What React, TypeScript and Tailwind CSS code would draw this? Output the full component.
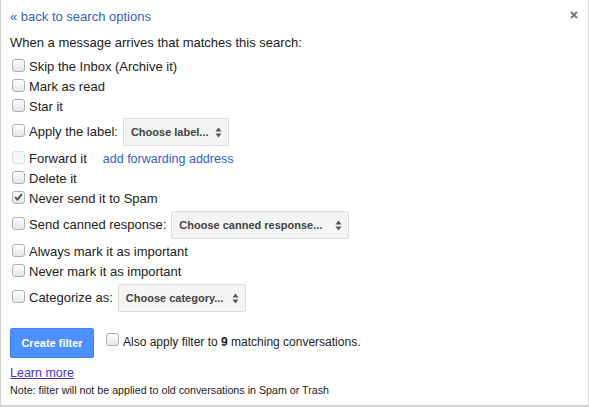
import React from 'react'

interface CheckboxProps {
  checked?: boolean
  disabled?: boolean
}

const Checkbox: React.FC<CheckboxProps> = ({ checked = false, disabled = false }) => (
  <span
    className={`relative flex h-[13px] w-[13px] shrink-0 items-center justify-center rounded-[3px] border mb-[4px] ${
      disabled
        ? 'border-[#dedede] bg-[#f8f8f8]'
        : 'border-[#b0b0b0] bg-gradient-to-b from-white to-[#e6e6e6]'
    }`}
  >
    {checked && (
      <svg width="9" height="8" viewBox="0 0 9 8">
        <path d="M1 4.2 L3.4 6.6 L8 1.2" fill="none" stroke="#4a4a4a" strokeWidth="1.9" />
      </svg>
    )}
  </span>
)

const SelectArrows = () => (
  <svg width="7" height="11" viewBox="0 0 7 11" className="shrink-0">
    <path d="M0.5 4.5 L3.5 0.5 L6.5 4.5 Z" fill="#555" />
    <path d="M0.5 6.5 L3.5 10.5 L6.5 6.5 Z" fill="#555" />
  </svg>
)

interface SelectBoxProps {
  label: string
  width: string
}

const SelectBox: React.FC<SelectBoxProps> = ({ label, width }) => (
  <div
    className={`ml-[5px] flex h-[28px] items-center justify-between rounded-[2px] border border-[#dcdcdc] bg-[#f4f4f4] pl-[7px] pr-[6px] text-[11px] font-bold text-[#444] ${width}`}
  >
    <span>{label}</span>
    <SelectArrows />
  </div>
)

const CheckRow: React.FC<{ text: string, checked?: boolean, className?: string }> = ({ text, checked, className = 'h-[20px]' }) => (
  <div className={`flex items-center ${className}`}>
    <span className="ml-[2px] mr-[4px] flex">
      <Checkbox checked={checked} />
    </span>
    <span>{text}</span>
  </div>
)

const App: React.FC = () => {
  return (
    <div className="relative h-[407px] w-[589px] border-x border-b-2 border-[#d4d4d4] bg-white font-['Liberation_Sans',Arial,sans-serif] text-[13px] leading-[16px] text-[#222]">
      {/* close */}
      <button className="absolute right-[10px] top-[11px]">
        <svg width="8" height="8" viewBox="0 0 8 8">
          <path d="M1 1 L7 7 M7 1 L1 7" stroke="#7a7a7a" strokeWidth="2" />
        </svg>
      </button>

      <div className="flex flex-col pl-[9px] pt-[9px]">
        <a className="h-[16px] text-[#2f63c4]">« back to search options</a>

        <div className="mt-[10px] h-[16px]">When a message arrives that matches this search:</div>

        <div className="mt-[6px] flex flex-col">
          <CheckRow text="Skip the Inbox (Archive it)" />
          <CheckRow text="Mark as read" />
          <CheckRow text="Star it" />
        </div>

        <div className="mt-[1px] flex h-[28px] items-center">
          <span className="ml-[2px] mr-[4px] flex">
            <Checkbox />
          </span>
          <span>Apply the label:</span>
          <SelectBox label="Choose label..." width="w-[106px]" />
        </div>

        <div className="mt-[3px] flex flex-col">
          <div className="flex h-[20px] items-center">
            <span className="ml-[2px] mr-[4px] flex">
              <Checkbox disabled />
            </span>
            <span>Forward it</span>
            <a className="ml-[16px] text-[12.5px] text-[#2f63c4]">add forwarding address</a>
          </div>
          <CheckRow text="Delete it" />
          <CheckRow text="Never send it to Spam" checked />
        </div>

        <div className="mt-[2px] flex h-[28px] items-center">
          <span className="ml-[2px] mr-[4px] flex">
            <Checkbox />
          </span>
          <span>Send canned response:</span>
          <SelectBox label="Choose canned response..." width="w-[178px]" />
        </div>

        <div className="mt-[3px] flex flex-col">
          <CheckRow text="Always mark it as important" />
          <CheckRow text="Never mark it as important" />
        </div>

        <div className="mt-[2px] flex h-[28px] items-center">
          <span className="ml-[2px] mr-[4px] flex">
            <Checkbox />
          </span>
          <span>Categorize as:</span>
          <SelectBox label="Choose category..." width="w-[128px]" />
        </div>

        <div className="mt-[16px] flex h-[30px] items-start">
          <button className="h-[30px] w-[84px] rounded-[2px] border border-[#3a83f4] bg-[#4d90fe] text-[11px] font-bold text-white">
            Create filter
          </button>
          <div className="ml-[12px] mt-[5px] flex items-center text-[12px]">
            <span className="mr-[4px] flex">
              <Checkbox />
            </span>
            <span>
              Also apply filter to <b>9</b> matching conversations.
            </span>
          </div>
        </div>

        <a className="mt-[7px] h-[16px] self-start text-[12.5px] text-[#4b35cf] underline">Learn more</a>

        <div className="mt-[3px] h-[12px] text-[10.7px] leading-[12px]">
          Note: filter will not be applied to old conversations in Spam or Trash
        </div>
      </div>
    </div>
  )
}

export default App
